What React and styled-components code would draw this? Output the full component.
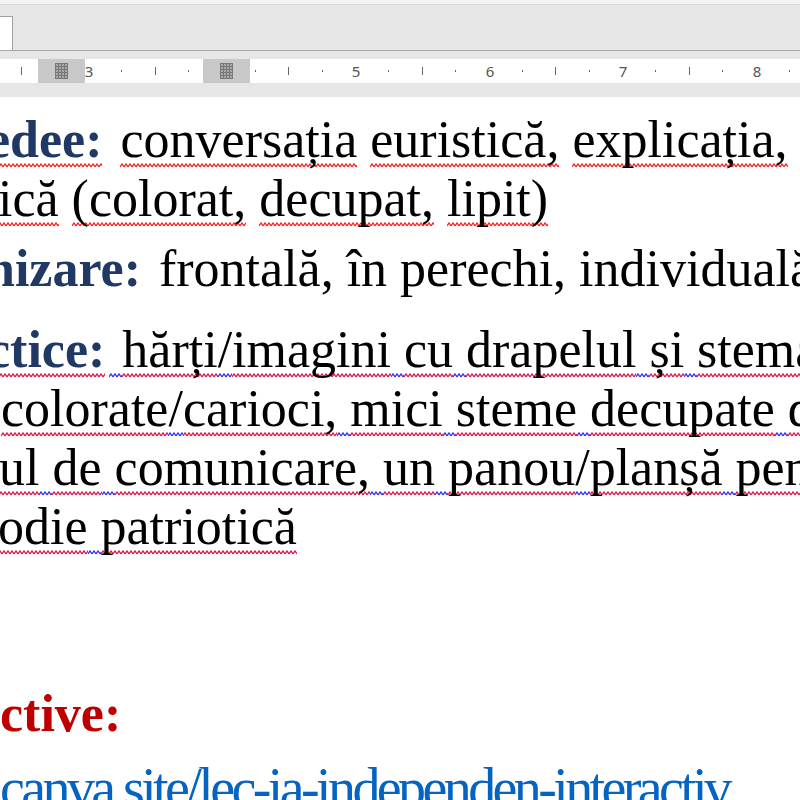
import React from 'react';
import styled, { createGlobalStyle } from 'styled-components';

const GlobalStyle = createGlobalStyle`
  html, body {
    margin: 0;
    padding: 0;
    background: #fff;
  }
  body {
    width: 800px;
    height: 800px;
    overflow: hidden;
  }
`;

const Window = styled.div`
  width: 800px;
  height: 800px;
  display: flex;
  flex-direction: column;
  overflow: hidden;
  background: #fff;
`;

const TopStrip = styled.div`
  height: 4px;
  background: #f3f3f3;
  border-bottom: 1px solid #dadada;
`;

const Toolbar = styled.div`
  height: 45px;
  background: #e6e6e6;
  border-bottom: 1px solid #a9a9a9;
  display: flex;
  align-items: flex-end;
`;

const NameBox = styled.div`
  width: 12px;
  height: 33px;
  background: #fff;
  border-top: 1px solid #a0a0a0;
  border-right: 1px solid #a0a0a0;
`;

const RulerBar = styled.div`
  height: 46px;
  padding-top: 8px;
  box-sizing: border-box;
  background: #e6e6e6;
`;

const Ruler = styled.div`
  position: relative;
  height: 24px;
  background: #fff;
  font-family: "Noto Sans", "DejaVu Sans", sans-serif;
  font-size: 15px;
  color: #555;
`;

const Tick = styled.span`
  position: absolute;
  left: ${(p) => p.$x}px;
  top: ${(p) => (p.$major ? 8 : 11)}px;
  width: 1px;
  height: ${(p) => (p.$major ? 8 : 2)}px;
  background: #666;
`;

const Num = styled.span`
  position: absolute;
  left: ${(p) => p.$x}px;
  top: 1px;
  line-height: 22px;
  transform: translateX(-50%);
`;

const ColumnMark = styled.div`
  position: absolute;
  left: ${(p) => p.$x}px;
  top: 0;
  width: 47px;
  height: 24px;
  background: #c8c8c8;
  display: flex;
  align-items: center;
  justify-content: center;
`;

const Doc = styled.div`
  flex: 1;
  overflow: hidden;
  padding-top: 13px;
  font-family: "Liberation Serif", "Times New Roman", serif;
  font-size: 52px;
  color: #000;
`;

const Line = styled.div`
  white-space: nowrap;
  height: 59px;
  line-height: 59px;
  margin-left: ${(p) => p.$shift || 0}px;
  margin-top: ${(p) => p.$gap || 0}px;
`;

const Label = styled.b`
  color: ${(p) => (p.$tone === 'red' ? '#c00000' : '#1f3864')};
  margin-right: ${(p) => p.$after || 0}px;
`;

const wave = (c) =>
  `url("data:image/svg+xml,%3Csvg xmlns='http://www.w3.org/2000/svg' width='4' height='5'%3E%3Cpath d='M0 4 L2 1 L4 4' fill='none' stroke='%23${c}' stroke-width='1.3'/%3E%3C/svg%3E")`;

const tones = {
  red: 'ff1f1f',
  crimson: 'e3134a',
  blue: '2f2fff',
};

const Sq = styled.span`
  background-image: ${(p) => wave(tones[p.$c || 'red'])};
  background-repeat: repeat-x;
  background-size: 4px 5px;
  background-position: 0 100%;
`;

const LinkLine = styled.div`
  white-space: nowrap;
  margin-top: ${(p) => p.$gap}px;
  font-size: 56px;
  line-height: 60px;
  letter-spacing: -3.6px;
  color: #0563c1;
`;

const GridIcon = () => (
  <svg width="13" height="16" viewBox="0 0 13 16">
    <rect x="0" y="0" width="13" height="16" fill="#a8a8a8" />
    {[0, 3, 6, 9, 12].map((v) => (
      <rect key={'v' + v} x={v} y="0" width="1" height="16" fill="#777" />
    ))}
    {[0, 3, 6, 9, 12, 15].map((v) => (
      <rect key={'h' + v} x="0" y={v} width="13" height="1" fill="#777" />
    ))}
  </svg>
);

const unit = 133.5;
const at = (n) => Math.round(355 + (n - 5) * unit);

const rulerMarks = [];
for (let q = 2.25; q <= 8.5; q += 0.25) {
  const x = at(q);
  if (x < 0 || x > 800) continue;
  if (Number.isInteger(q)) continue;
  rulerMarks.push({ x, major: q % 1 === 0.5 });
}

// grammar-style line: words crimson, gaps and slashes blue
const marked = (text) =>
  text.split(/([\s/]+)/).filter(Boolean).map((part, i) => (
    <Sq key={i} $c={/^[\s/]+$/.test(part) ? 'blue' : 'crimson'}>{part}</Sq>
  ));

// spelling-style line: every word red, spaces clean
const words = (text) =>
  text.split(/(\s+)/).map((part, i) =>
    /^\s+$/.test(part) || !part ? part : <Sq key={i}>{part}</Sq>
  );

export default function App() {
  return (
    <Window>
      <GlobalStyle />
      <TopStrip />
      <Toolbar>
        <NameBox />
      </Toolbar>
      <RulerBar>
        <Ruler>
          {rulerMarks.map((m) => (
            <Tick key={m.x} $x={m.x} $major={m.major} />
          ))}
          {[3, 5, 6, 7, 8].map((n) => (
            <Num key={n} $x={at(n) + 1}>{n}</Num>
          ))}
          <ColumnMark $x={38}>
            <GridIcon />
          </ColumnMark>
          <ColumnMark $x={203}>
            <GridIcon />
          </ColumnMark>
        </Ruler>
      </RulerBar>
      <Doc>
        <Line $shift={-13}>
          <Label $after={5}><Sq>edee:</Sq></Label> {words('conversația euristică, explicația,')} l
        </Line>
        <Line $shift={-2}>{words('ică (colorat, decupat, lipit)')}</Line>
        <Line $shift={-14} $gap={11}>
          <Label $after={5}>nizare:</Label> frontală, în perechi, individuală
        </Line>
        <Line $shift={-13} $gap={22}>
          <Label $after={4}><Sq $c="crimson">ctice:</Sq></Label>
          {marked(' hărți/imagini cu drapelul și stema')}
        </Line>
        <Line $shift={1}>{marked('colorate/carioci, mici steme decupate din')}</Line>
        <Line $shift={-1}>{marked('ul de comunicare, un panou/planșă pentru')}</Line>
        <Line $shift={-2}>{marked('odie patriotică')}</Line>
        <Line $gap={128}>
          <Label $tone="red">ctive:</Label>
        </Line>
        <LinkLine $gap={15}>canva.site/lec-ia-independen-interactiv</LinkLine>
      </Doc>
    </Window>
  );
}
